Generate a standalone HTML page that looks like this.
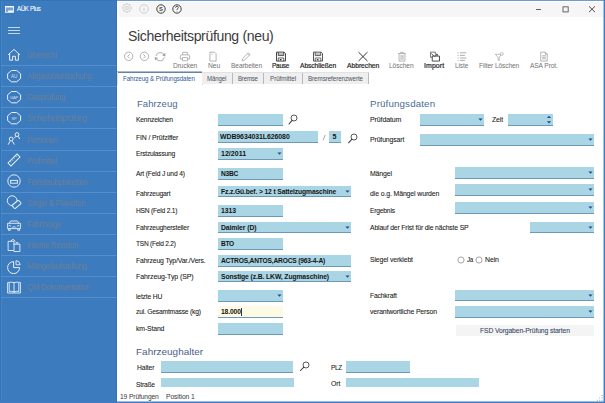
<!DOCTYPE html>
<html><head><meta charset="utf-8"><style>
html,body{margin:0;padding:0;width:605px;height:403px;overflow:hidden;background:#fff;font-family:"Liberation Sans", sans-serif;}
.t{position:absolute;white-space:pre;line-height:1;}
.s{-webkit-text-stroke:0.08px currentColor;}
.s2{-webkit-text-stroke:0.4px currentColor;}
.s3{-webkit-text-stroke:0.2px currentColor;}
.r{position:absolute;}
</style></head><body>
<div class="r" style="left:0px;top:0px;width:117px;height:403px;background:#3c7bbd;"></div>
<svg class="r" style="left:5px;top:5.6px" width="9" height="7" viewBox="0 0 9 7"><rect x="0.4" y="0.4" width="8.2" height="5.9" fill="rgba(255,255,255,0.3)" stroke="#fff" stroke-width="0.8"/><rect x="0.4" y="0.3" width="8.2" height="1.1" fill="#fff"/><rect x="3.1" y="4.5" width="4.8" height="1.5" fill="#fff"/></svg>
<div class="t s" style="left:17.00px;top:6px;font-size:6.6px;color:#ffffff;font-weight:normal;letter-spacing:0px;letter-spacing:-0.289px;transform:scaleX(0.911);transform-origin:0 0;">AÜK Plus</div>
<div class="r" style="left:8px;top:27px;width:11.6px;height:1px;background:#c3d6ec;"></div>
<div class="r" style="left:8px;top:30px;width:11.6px;height:1px;background:#c3d6ec;"></div>
<div class="r" style="left:8px;top:33px;width:11.6px;height:1px;background:#c3d6ec;"></div>
<div class="r" style="left:0px;top:65px;width:117px;height:1px;background:#5a93d2;opacity:0.8"></div>
<div class="t" style="left:27.20px;top:52px;font-size:8.2px;color:#6c7f98;font-weight:normal;letter-spacing:0px;letter-spacing:-0.266px;transform:scaleX(0.926);transform-origin:0 0;">Übersicht</div>
<svg class="r" style="left:5.9px;top:46.7px" width="16" height="16" viewBox="0 0 16 16"><path d="M2.1 7.9 L8 2.4 L13.9 7.9 M3.6 6.5 V13.2 H6.6 V9.3 H9.4 V13.2 H12.4 V6.5" fill="none" stroke="#e9f0f8" stroke-width="1"/></svg>
<div class="r" style="left:0px;top:86px;width:117px;height:1px;background:#5a93d2;opacity:0.8"></div>
<div class="t" style="left:27.20px;top:73px;font-size:8.2px;color:#6c7f98;font-weight:normal;letter-spacing:0px;letter-spacing:-0.251px;transform:scaleX(0.938);transform-origin:0 0;">Abgasuntersuchung</div>
<svg class="r" style="left:5.9px;top:67.8px" width="16" height="16" viewBox="0 0 16 16"><path d="M5.5 2.5 H10.7 L14.6 5.8 V10.5 L10.7 13.8 H5.5 L1.6 10.5 V5.8 Z" fill="none" stroke="#e9f0f8" stroke-width="1"/><text x="8.1" y="9.7" font-size="4.6" fill="#e9f0f8" text-anchor="middle" font-family="Liberation Sans" opacity="0.85">AU</text></svg>
<div class="r" style="left:0px;top:107px;width:117px;height:1px;background:#5a93d2;opacity:0.8"></div>
<div class="t" style="left:27.20px;top:94px;font-size:8.2px;color:#6c7f98;font-weight:normal;letter-spacing:0px;letter-spacing:-0.240px;transform:scaleX(0.941);transform-origin:0 0;">Gasprüfung</div>
<svg class="r" style="left:5.9px;top:88.9px" width="16" height="16" viewBox="0 0 16 16"><path d="M5.5 2.5 H10.7 L14.6 5.8 V10.5 L10.7 13.8 H5.5 L1.6 10.5 V5.8 Z" fill="none" stroke="#e9f0f8" stroke-width="1"/><text x="8.1" y="9.7" font-size="3.9" fill="#e9f0f8" text-anchor="middle" font-family="Liberation Sans" opacity="0.85">GAP</text></svg>
<div class="r" style="left:0px;top:128px;width:117px;height:1px;background:#5a93d2;opacity:0.8"></div>
<div class="t" style="left:27.20px;top:115px;font-size:8.2px;color:#6c7f98;font-weight:normal;letter-spacing:0px;letter-spacing:-0.238px;transform:scaleX(0.933);transform-origin:0 0;">Sicherheitsprüfung</div>
<svg class="r" style="left:5.9px;top:110.0px" width="16" height="16" viewBox="0 0 16 16"><path d="M5.5 2.5 H10.7 L14.6 5.8 V10.5 L10.7 13.8 H5.5 L1.6 10.5 V5.8 Z" fill="none" stroke="#e9f0f8" stroke-width="1"/><text x="8.1" y="9.7" font-size="4.0" fill="#e9f0f8" text-anchor="middle" font-family="Liberation Sans" opacity="0.85">SP</text></svg>
<div class="r" style="left:0px;top:150px;width:117px;height:1px;background:#5a93d2;opacity:0.8"></div>
<div class="t" style="left:27.20px;top:137px;font-size:8.2px;color:#6c7f98;font-weight:normal;letter-spacing:0px;letter-spacing:-0.285px;transform:scaleX(0.930);transform-origin:0 0;">Personen</div>
<svg class="r" style="left:5.9px;top:131.1px" width="16" height="16" viewBox="0 0 16 16"><circle cx="5.2" cy="8" r="1.9" fill="none" stroke="#e9f0f8" stroke-width="1"/><path d="M2.2 13.6 L4 10.2 M6.4 10.2 L8.4 13.6" fill="none" stroke="#e9f0f8" stroke-width="1"/><circle cx="11" cy="3.6" r="1.9" fill="none" stroke="#e9f0f8" stroke-width="1"/><path d="M9.6 5.4 L8.3 7.2 M12.4 5.4 L13.6 8" fill="none" stroke="#e9f0f8" stroke-width="1"/></svg>
<div class="r" style="left:0px;top:171px;width:117px;height:1px;background:#5a93d2;opacity:0.8"></div>
<div class="t" style="left:27.20px;top:158px;font-size:8.2px;color:#6c7f98;font-weight:normal;letter-spacing:0px;letter-spacing:-0.225px;transform:scaleX(0.930);transform-origin:0 0;">Prüfmittel</div>
<svg class="r" style="left:5.9px;top:152.2px" width="16" height="16" viewBox="0 0 16 16"><g transform="rotate(-45 8 8)"><rect x="1.6" y="5.9" width="12.8" height="4.2" fill="none" stroke="#e9f0f8" stroke-width="0.95"/><path d="M4.2 5.9 V7.4 M6.8 5.9 V7.8 M9.4 5.9 V7.4 M12 5.9 V7.8" stroke="#e9f0f8" stroke-width="0.75"/></g></svg>
<div class="r" style="left:0px;top:192px;width:117px;height:1px;background:#5a93d2;opacity:0.8"></div>
<div class="t" style="left:27.20px;top:179px;font-size:8.2px;color:#6c7f98;font-weight:normal;letter-spacing:0px;letter-spacing:-0.250px;transform:scaleX(0.930);transform-origin:0 0;">Feinstaubplaketten</div>
<svg class="r" style="left:5.9px;top:173.3px" width="16" height="16" viewBox="0 0 16 16"><circle cx="8" cy="8" r="6.2" fill="none" stroke="#e9f0f8" stroke-width="0.95"/><rect x="4.6" y="7.4" width="6.8" height="2.8" fill="none" stroke="#e9f0f8" stroke-width="0.95"/></svg>
<div class="r" style="left:0px;top:213px;width:117px;height:1px;background:#5a93d2;opacity:0.8"></div>
<div class="t" style="left:27.20px;top:200px;font-size:8.2px;color:#6c7f98;font-weight:normal;letter-spacing:0px;letter-spacing:-0.242px;transform:scaleX(0.930);transform-origin:0 0;">Siegel &amp; Plaketten</div>
<svg class="r" style="left:5.9px;top:194.4px" width="16" height="16" viewBox="0 0 16 16"><circle cx="6.2" cy="6.7" r="4.9" fill="none" stroke="#e9f0f8" stroke-width="1"/><g transform="rotate(-40 10.5 10.5)"><rect x="6.3" y="8.3" width="8.6" height="4.5" rx="1.2" fill="#3c7bbd" stroke="#e9f0f8" stroke-width="1"/></g></svg>
<div class="r" style="left:0px;top:234px;width:117px;height:1px;background:#5a93d2;opacity:0.8"></div>
<div class="t" style="left:27.20px;top:221px;font-size:8.2px;color:#6c7f98;font-weight:normal;letter-spacing:0px;letter-spacing:-0.283px;transform:scaleX(0.930);transform-origin:0 0;">Fahrzeuge</div>
<svg class="r" style="left:5.9px;top:215.5px" width="16" height="16" viewBox="0 0 16 16"><path d="M3.2 7.3 L4.6 5 H11.4 L12.8 7.3 M1.6 7.3 H14.4 V12.6 H1.6 Z M2.4 12.6 V14.3 H4.2 V12.6 M11.8 12.6 V14.3 H13.6 V12.6 M2.8 9.4 L5 10.2 M13.2 9.4 L11 10.2 M6.2 11.6 L6.8 10.9 H9.2 L9.8 11.6" fill="none" stroke="#e9f0f8" stroke-width="0.9"/></svg>
<div class="r" style="left:0px;top:255px;width:117px;height:1px;background:#5a93d2;opacity:0.8"></div>
<div class="t" style="left:27.20px;top:242px;font-size:8.2px;color:#6c7f98;font-weight:normal;letter-spacing:0px;letter-spacing:-0.255px;transform:scaleX(0.926);transform-origin:0 0;">Interne Revision</div>
<svg class="r" style="left:5.9px;top:236.6px" width="16" height="16" viewBox="0 0 16 16"><path d="M2.1 4.3 H8 V13.5 H2.1 Z M4.6 4.3 L7 2.3 L9.4 4.3 M7.6 7.2 H13.9 V14.5 H7.6" fill="none" stroke="#e9f0f8" stroke-width="0.9"/><path d="M10 7.2 V5.6 H12 V7.2" fill="none" stroke="#e9f0f8" stroke-width="0.8"/></svg>
<div class="r" style="left:0px;top:276px;width:117px;height:1px;background:#5a93d2;opacity:0.8"></div>
<div class="t" style="left:27.20px;top:263px;font-size:8.2px;color:#6c7f98;font-weight:normal;letter-spacing:0px;letter-spacing:-0.199px;transform:scaleX(0.946);transform-origin:0 0;">Mängelaufstellung</div>
<svg class="r" style="left:5.9px;top:257.7px" width="16" height="16" viewBox="0 0 16 16"><path d="M7.6 3.6 A6 6 0 1 0 13.6 9.6 H7.6 Z" fill="none" stroke="#e9f0f8" stroke-width="1"/><path d="M10 2.6 A4.6 4.6 0 0 1 14.2 6.8 H10 Z" fill="none" stroke="#e9f0f8" stroke-width="0.9"/></svg>
<div class="r" style="left:0px;top:297px;width:117px;height:1px;background:#5a93d2;opacity:0.8"></div>
<div class="t" style="left:27.20px;top:284px;font-size:8.2px;color:#6c7f98;font-weight:normal;letter-spacing:0px;letter-spacing:-0.233px;transform:scaleX(0.944);transform-origin:0 0;">QM Dokumentation</div>
<svg class="r" style="left:5.9px;top:278.8px" width="16" height="16" viewBox="0 0 16 16"><path d="M1.6 3.6 Q5 2.6 8 3.6 Q11 2.6 14.4 3.6 V14 H1.6 Z M8 3.6 V14 M3.2 4 V12.4 Q5.6 12 8 12.9 Q10.4 12 12.8 12.4 V4" fill="none" stroke="#e9f0f8" stroke-width="0.9"/></svg>
<div class="r" style="left:117px;top:0px;width:2px;height:403px;background:#ffffff;"></div>
<div class="r" style="left:119px;top:2px;width:484px;height:15px;background:#f6f6f6;"></div>
<svg class="r" style="left:121.3px;top:2.2px" width="12" height="12" viewBox="0 0 12 12"><path d="M10.48 5.56 L10.48 6.44 L9.16 6.96 L8.91 7.56 L9.48 8.85 L8.85 9.48 L7.56 8.91 L6.96 9.16 L6.44 10.48 L5.56 10.48 L5.04 9.16 L4.44 8.91 L3.15 9.48 L2.52 8.85 L3.09 7.56 L2.84 6.96 L1.52 6.44 L1.52 5.56 L2.84 5.04 L3.09 4.44 L2.52 3.15 L3.15 2.52 L4.44 3.09 L5.04 2.84 L5.56 1.52 L6.44 1.52 L6.96 2.84 L7.56 3.09 L8.85 2.52 L9.48 3.15 L8.91 4.44 L9.16 5.04 Z" fill="none" stroke="#c8c8c8" stroke-width="0.8" stroke-linejoin="round"/><circle cx="6" cy="6" r="1.5" fill="none" stroke="#c8c8c8" stroke-width="0.8"/></svg>
<svg class="r" style="left:138.4px;top:2.6px" width="12" height="12" viewBox="0 0 12 12"><circle cx="6" cy="6" r="4.3" fill="none" stroke="#c8c8c8" stroke-width="0.8"/><path d="M6 5 V8.6" stroke="#c8c8c8" stroke-width="0.8"/><circle cx="6" cy="3.8" r="0.45" fill="#c8c8c8"/></svg>
<svg class="r" style="left:154.6px;top:2.6px" width="12" height="12" viewBox="0 0 12 12"><circle cx="6" cy="6" r="4.2" fill="none" stroke="#404040" stroke-width="1"/><text x="6" y="8.1" font-size="5.8" font-weight="bold" fill="#404040" text-anchor="middle" font-family="Liberation Sans">S</text></svg>
<svg class="r" style="left:171.4px;top:2.6px" width="12" height="12" viewBox="0 0 12 12"><circle cx="6" cy="6" r="4.2" fill="none" stroke="#404040" stroke-width="1"/><path d="M4.6 4.8 Q4.6 3.3 6 3.3 Q7.4 3.3 7.4 4.6 Q7.4 5.5 6 6.1 V7" fill="none" stroke="#404040" stroke-width="0.8"/><circle cx="6" cy="8.3" r="0.45" fill="#404040"/></svg>
<div class="r" style="left:535.6px;top:9px;width:5.6px;height:1px;background:#606060;"></div>
<svg class="r" style="left:561px;top:5px" width="9" height="9"><rect x="2" y="1.8" width="5.2" height="5.1" fill="none" stroke="#606060" stroke-width="0.95"/></svg>
<svg class="r" style="left:588px;top:5px" width="9" height="9"><path d="M1 1.3 L7 7.1 M7 1.3 L1 7.1" stroke="#505050" stroke-width="1"/></svg>
<div class="t" style="left:127.60px;top:28px;font-size:15px;color:#3c3c3c;font-weight:normal;letter-spacing:0px;letter-spacing:-0.391px;transform:scaleX(0.939);transform-origin:0 0;">Sicherheitsprüfung (neu)</div>
<svg class="r" style="left:122px;top:50px" width="45" height="13" viewBox="0 0 45 13"><circle cx="6.7" cy="6.3" r="4.2" fill="none" stroke="#a2a2a2" stroke-width="0.85"/><path d="M7.6 4.3 L5.7 6.3 L7.6 8.3" fill="none" stroke="#a2a2a2" stroke-width="0.85"/><circle cx="22.4" cy="6.3" r="4.2" fill="none" stroke="#a2a2a2" stroke-width="0.85"/><path d="M21.5 4.3 L23.4 6.3 L21.5 8.3" fill="none" stroke="#a2a2a2" stroke-width="0.85"/><path d="M33.96 5.97 A4.2 4.2 0 0 1 42.16 5.61 M42.24 7.43 A4.2 4.2 0 0 1 34.04 7.79" fill="none" stroke="#a2a2a2" stroke-width="0.85"/><path d="M43.2 2.8 L43.4 6.4 L40.2 5.4 Z M33 10.6 L32.8 7.0 L36 8.0 Z" fill="#a2a2a2"/></svg>
<div class="t" style="left:172.60px;top:63px;font-size:6.8px;color:#727272;font-weight:normal;letter-spacing:0px;letter-spacing:-0.079px;transform:scaleX(0.978);transform-origin:0 0;">Drucken</div>
<svg class="r" style="left:178.2px;top:50px" width="14" height="13" viewBox="0 0 14 13"><g transform="translate(7 6.6) scale(0.86) translate(-7 -6.6)"><path d="M4.3 4.6 V1.6 H9.7 V4.6 M3 4.6 H11 Q12.4 4.6 12.4 6 V9.4 H10 M4 9.4 H1.6 V6 Q1.6 4.6 3 4.6 M4 7.8 H10 V11.4 H4 Z" fill="none" stroke="#a0a0a0" stroke-width="0.9"/></g></svg>
<div class="t" style="left:207.60px;top:63px;font-size:6.8px;color:#727272;font-weight:normal;letter-spacing:0px;letter-spacing:-0.045px;transform:scaleX(0.989);transform-origin:0 0;">Neu</div>
<svg class="r" style="left:206.4px;top:50px" width="14" height="13" viewBox="0 0 14 13"><g transform="translate(7 6.6) scale(0.86) translate(-7 -6.6)"><path d="M3.4 1.4 H8.8 L10.6 3.2 V11.8 H3.4 Z" fill="none" stroke="#a0a0a0" stroke-width="0.9"/><path d="M6 3 V4.6" stroke="#a0a0a0" stroke-width="0.7"/></g></svg>
<div class="t" style="left:230.80px;top:63px;font-size:6.8px;color:#727272;font-weight:normal;letter-spacing:0px;letter-spacing:-0.095px;transform:scaleX(0.970);transform-origin:0 0;">Bearbeiten</div>
<svg class="r" style="left:239.3px;top:50px" width="14" height="13" viewBox="0 0 14 13"><g transform="translate(7 6.6) scale(0.86) translate(-7 -6.6)"><path d="M2.6 11.4 L3.2 8.8 L9.8 2.2 L11.8 4.2 L5.2 10.8 Z M8.8 3.2 L10.8 5.2" fill="none" stroke="#a0a0a0" stroke-width="0.9"/></g></svg>
<div class="t s3" style="left:272.20px;top:63px;font-size:6.8px;color:#262626;font-weight:normal;letter-spacing:0px;letter-spacing:-0.218px;transform:scaleX(0.940);transform-origin:0 0;">Pause</div>
<svg class="r" style="left:274.3px;top:50px" width="14" height="13" viewBox="0 0 14 13"><g transform="translate(7 6.6) scale(0.86) translate(-7 -6.6)"><path d="M1.8 1.4 H10.6 L12.2 3 V11.8 H1.8 Z" fill="none" stroke="#3a3a3a" stroke-width="1.1"/><path d="M3.8 1.4 V5.4 H10.2 V1.4" fill="none" stroke="#3a3a3a" stroke-width="1"/><rect x="3.8" y="2.6" width="6.4" height="2.2" fill="#3a3a3a" opacity="0.35"/><path d="M3.8 11.8 V8.2 H10.2 V11.8" fill="none" stroke="#3a3a3a" stroke-width="0.9"/><rect x="5.6" y="9.4" width="2" height="1.6" fill="#3a3a3a"/></g></svg>
<div class="t s3" style="left:300.00px;top:63px;font-size:6.8px;color:#262626;font-weight:normal;letter-spacing:0px;letter-spacing:-0.059px;transform:scaleX(0.982);transform-origin:0 0;">Abschließen</div>
<svg class="r" style="left:311.2px;top:50px" width="14" height="13" viewBox="0 0 14 13"><g transform="translate(7 6.6) scale(0.86) translate(-7 -6.6)"><path d="M1.8 1.4 H10.6 L12.2 3 V11.8 H1.8 Z" fill="none" stroke="#4a4a4a" stroke-width="1.1"/><path d="M3.8 1.4 V5.4 H10.2 V1.4" fill="none" stroke="#4a4a4a" stroke-width="1"/><rect x="3.8" y="2.6" width="6.4" height="2.2" fill="#4a4a4a" opacity="0.35"/><path d="M3.8 11.8 V8.2 H10.2 V11.8" fill="none" stroke="#4a4a4a" stroke-width="0.9"/><rect x="5.6" y="9.4" width="2" height="1.6" fill="#4a4a4a"/></g></svg>
<div class="t s3" style="left:347.00px;top:63px;font-size:6.8px;color:#262626;font-weight:normal;letter-spacing:0px;letter-spacing:-0.033px;transform:scaleX(0.991);transform-origin:0 0;">Abbrechen</div>
<svg class="r" style="left:356px;top:50px" width="14" height="13" viewBox="0 0 14 13"><g transform="translate(7 6.6) scale(0.86) translate(-7 -6.6)"><path d="M1.8 1.4 L12.2 11.8 M12.2 1.4 L1.8 11.8" stroke="#2a2a2a" stroke-width="1.1"/></g></svg>
<div class="t" style="left:389.20px;top:63px;font-size:6.8px;color:#727272;font-weight:normal;letter-spacing:0px;letter-spacing:-0.086px;transform:scaleX(0.976);transform-origin:0 0;">Löschen</div>
<svg class="r" style="left:394.5px;top:50px" width="14" height="13" viewBox="0 0 14 13"><g transform="translate(7 6.6) scale(0.86) translate(-7 -6.6)"><path d="M2.6 3 H11.4 M5.5 3 V1.6 H8.5 V3 M3.6 3 V11.8 H10.4 V3" fill="none" stroke="#a0a0a0" stroke-width="0.9"/><rect x="5" y="4.6" width="4" height="5.8" fill="#a0a0a0" opacity="0.5"/></g></svg>
<div class="t s3" style="left:424.00px;top:63px;font-size:6.8px;color:#262626;font-weight:normal;letter-spacing:0px;letter-spacing:0.078px;transform:scaleX(1.024);transform-origin:0 0;">Import</div>
<svg class="r" style="left:427.6px;top:50px" width="14" height="13" viewBox="0 0 14 13"><g transform="translate(7 6.6) scale(0.86) translate(-7 -6.6)"><path d="M1.8 1.4 H7.4 V4.4 M1.8 1.4 V7.4 H3.8" fill="none" stroke="#555" stroke-width="0.9"/><path d="M3.8 6 H12.2 V11.8 H3.8 Z" fill="none" stroke="#333" stroke-width="1"/><path d="M2.6 3 L6.4 6.4 L9.6 4.2 M8 3.8 H9.8 V5.6" fill="none" stroke="#333" stroke-width="0.9"/></g></svg>
<div class="t" style="left:455.00px;top:63px;font-size:6.8px;color:#727272;font-weight:normal;letter-spacing:0px;letter-spacing:-0.116px;transform:scaleX(0.958);transform-origin:0 0;">Liste</div>
<svg class="r" style="left:454.6px;top:50px" width="14" height="13" viewBox="0 0 14 13"><g transform="translate(7 6.6) scale(0.86) translate(-7 -6.6)"><path d="M2.4 1.6 V2.8 M2.4 4.6 V5.8 M2.4 7.6 V8.8 M2.4 10.4 V11.6 M4.6 2.2 H12 M4.6 5.2 H10.4 M4.6 8.2 H12 M4.6 11 H10.4" fill="none" stroke="#a0a0a0" stroke-width="1"/></g></svg>
<div class="t" style="left:478.80px;top:63px;font-size:6.8px;color:#727272;font-weight:normal;letter-spacing:0px;letter-spacing:-0.089px;transform:scaleX(0.970);transform-origin:0 0;">Filter Löschen</div>
<svg class="r" style="left:492px;top:50px" width="14" height="13" viewBox="0 0 14 13"><g transform="translate(7 6.6) scale(0.78) translate(-7 -6.6)"><path d="M2.2 3.6 H10.4 L7.4 7.4 V11.8 L5.8 10.8 V7.4 Z" fill="none" stroke="#a0a0a0" stroke-width="0.9"/><circle cx="10.6" cy="3.2" r="1.8" fill="#fff" stroke="#a0a0a0" stroke-width="0.8"/></g></svg>
<div class="t" style="left:529.50px;top:63px;font-size:6.8px;color:#727272;font-weight:normal;letter-spacing:0px;letter-spacing:-0.093px;transform:scaleX(0.971);transform-origin:0 0;">ASA Prot.</div>
<svg class="r" style="left:536.8px;top:50px" width="14" height="13" viewBox="0 0 14 13"><g transform="translate(7 6.6) scale(0.86) translate(-7 -6.6)"><path d="M3.2 1.4 H8.6 L10.8 3.6 V11.8 H3.2 Z M8.4 1.4 V3.8 H10.8 M4.8 5.6 H9.2 M4.8 7.4 H9.2 M4.8 9.2 H9.2" fill="none" stroke="#a0a0a0" stroke-width="0.9"/></g></svg>
<div class="r" style="left:117px;top:71px;width:85px;height:1px;background:rgba(74,109,154,0.45);"></div>
<div class="r" style="left:117px;top:72px;width:85px;height:1px;background:rgba(74,109,154,0.85);"></div>
<div class="r" style="left:201.5px;top:72px;width:1px;height:12.5px;background:#d8d8d8;"></div>
<div class="r" style="left:117px;top:72px;width:1px;height:13px;background:#e0e0e0;"></div>
<div class="r" style="left:202px;top:72px;width:31px;height:12px;background:#efefef;"></div>
<div class="r" style="left:202px;top:72px;width:31px;height:1px;background:#e2e2e2;"></div>
<div class="r" style="left:232px;top:73px;width:1px;height:11px;background:#b9b9b9;"></div>
<div class="t" style="left:207.40px;top:76px;font-size:6.4px;color:#4a5263;font-weight:normal;letter-spacing:0px;letter-spacing:-0.156px;transform:scaleX(0.953);transform-origin:0 0;">Mängel</div>
<div class="r" style="left:233px;top:72px;width:31px;height:12px;background:#efefef;"></div>
<div class="r" style="left:233px;top:72px;width:31px;height:1px;background:#e2e2e2;"></div>
<div class="r" style="left:263px;top:73px;width:1px;height:11px;background:#b9b9b9;"></div>
<div class="t" style="left:238.00px;top:76px;font-size:6.4px;color:#4a5263;font-weight:normal;letter-spacing:0px;letter-spacing:-0.186px;transform:scaleX(0.947);transform-origin:0 0;">Bremse</div>
<div class="r" style="left:264px;top:72px;width:39px;height:12px;background:#efefef;"></div>
<div class="r" style="left:264px;top:72px;width:39px;height:1px;background:#e2e2e2;"></div>
<div class="r" style="left:302px;top:73px;width:1px;height:11px;background:#b9b9b9;"></div>
<div class="t" style="left:270.00px;top:76px;font-size:6.4px;color:#4a5263;font-weight:normal;letter-spacing:0px;letter-spacing:-0.050px;transform:scaleX(0.981);transform-origin:0 0;">Prüfmittel</div>
<div class="r" style="left:303px;top:72px;width:66px;height:12px;background:#efefef;"></div>
<div class="r" style="left:303px;top:72px;width:66px;height:1px;background:#e2e2e2;"></div>
<div class="r" style="left:368px;top:73px;width:1px;height:11px;background:#b9b9b9;"></div>
<div class="t" style="left:307.50px;top:76px;font-size:6.4px;color:#4a5263;font-weight:normal;letter-spacing:0px;letter-spacing:-0.071px;transform:scaleX(0.977);transform-origin:0 0;">Bremsreferenzwerte</div>
<div class="t" style="left:123.40px;top:76px;font-size:6.4px;color:#2f5d96;font-weight:normal;letter-spacing:0px;letter-spacing:-0.096px;transform:scaleX(0.969);transform-origin:0 0;">Fahrzeug &amp; Prüfungsdaten</div>
<div class="t" style="left:136.60px;top:99px;font-size:9.5px;color:#4c6b98;font-weight:normal;letter-spacing:0px;letter-spacing:0.029px;transform:scaleX(1.006);transform-origin:0 0;">Fahrzeug</div>
<div class="t" style="left:369.70px;top:99px;font-size:9.5px;color:#4c6b98;font-weight:normal;letter-spacing:0px;letter-spacing:0.131px;transform:scaleX(1.027);transform-origin:0 0;">Prüfungsdaten</div>
<div class="t" style="left:136.20px;top:347px;font-size:9.8px;color:#4a5e86;font-weight:normal;letter-spacing:0px;letter-spacing:0.046px;transform:scaleX(1.010);transform-origin:0 0;">Fahrzeughalter</div>
<div class="t s" style="left:136.20px;top:116px;font-size:7.2px;color:#1a1a1a;font-weight:normal;letter-spacing:0px;letter-spacing:-0.212px;transform:scaleX(0.941);transform-origin:0 0;">Kennzeichen</div>
<div class="t s" style="left:136.20px;top:134px;font-size:7.2px;color:#1a1a1a;font-weight:normal;letter-spacing:0px;letter-spacing:-0.125px;transform:scaleX(0.955);transform-origin:0 0;">FIN / Prüfziffer</div>
<div class="t s" style="left:136.20px;top:150px;font-size:7.2px;color:#1a1a1a;font-weight:normal;letter-spacing:0px;letter-spacing:-0.233px;transform:scaleX(0.928);transform-origin:0 0;">Erstzulassung</div>
<div class="t s" style="left:136.20px;top:170px;font-size:7.2px;color:#1a1a1a;font-weight:normal;letter-spacing:0px;letter-spacing:-0.187px;transform:scaleX(0.935);transform-origin:0 0;">Art (Feld J und 4)</div>
<div class="t s" style="left:136.20px;top:190px;font-size:7.2px;color:#1a1a1a;font-weight:normal;letter-spacing:0px;letter-spacing:-0.198px;transform:scaleX(0.940);transform-origin:0 0;">Fahrzeugart</div>
<div class="t s" style="left:136.20px;top:207px;font-size:7.2px;color:#1a1a1a;font-weight:normal;letter-spacing:0px;letter-spacing:-0.237px;transform:scaleX(0.926);transform-origin:0 0;">HSN (Feld 2.1)</div>
<div class="t s" style="left:136.20px;top:224px;font-size:7.2px;color:#1a1a1a;font-weight:normal;letter-spacing:0px;letter-spacing:-0.193px;transform:scaleX(0.939);transform-origin:0 0;">Fahrzeughersteller</div>
<div class="t s" style="left:136.20px;top:240px;font-size:7.2px;color:#1a1a1a;font-weight:normal;letter-spacing:0px;letter-spacing:-0.269px;transform:scaleX(0.913);transform-origin:0 0;">TSN (Feld 2.2)</div>
<div class="t s" style="left:136.20px;top:257px;font-size:7.2px;color:#1a1a1a;font-weight:normal;letter-spacing:0px;letter-spacing:-0.151px;transform:scaleX(0.952);transform-origin:0 0;">Fahrzeug Typ/Var./Vers.</div>
<div class="t s" style="left:136.20px;top:273px;font-size:7.2px;color:#1a1a1a;font-weight:normal;letter-spacing:0px;letter-spacing:-0.092px;transform:scaleX(0.974);transform-origin:0 0;">Fahrzeug-Typ (SP)</div>
<div class="t s" style="left:136.20px;top:293px;font-size:7.2px;color:#1a1a1a;font-weight:normal;letter-spacing:0px;letter-spacing:-0.187px;transform:scaleX(0.940);transform-origin:0 0;">letzte HU</div>
<div class="t s" style="left:136.20px;top:308px;font-size:7.2px;color:#1a1a1a;font-weight:normal;letter-spacing:0px;letter-spacing:-0.216px;transform:scaleX(0.934);transform-origin:0 0;">zul. Gesamtmasse (kg)</div>
<div class="t s" style="left:136.20px;top:325px;font-size:7.2px;color:#1a1a1a;font-weight:normal;letter-spacing:0px;letter-spacing:-0.154px;transform:scaleX(0.958);transform-origin:0 0;">km-Stand</div>
<div class="r" style="left:218.2px;top:114px;width:64.80000000000001px;height:11px;background:#a9d5e4;"></div>
<div class="r" style="left:218.2px;top:125px;width:64.80000000000001px;height:1px;background:#6e98b8;"></div>
<svg class="r" style="left:286.40px;top:114.20px" width="12" height="12" viewBox="0 0 12 12"><circle cx="8" cy="4" r="3" fill="none" stroke="#3a3a3a" stroke-width="0.85"/><path d="M6.08 6.30 L3.00 10.00" stroke="#3a3a3a" stroke-width="1.05" stroke-linecap="round"/></svg>
<div class="r" style="left:218.2px;top:131px;width:100.19999999999999px;height:11px;background:#a9d5e4;"></div>
<div class="r" style="left:218.2px;top:142px;width:100.19999999999999px;height:1px;background:#6e98b8;"></div>
<div class="t" style="left:220.40px;top:133px;font-size:7px;color:#141414;font-weight:bold;letter-spacing:0px;letter-spacing:-0.056px;transform:scaleX(0.986);transform-origin:0 0;">WDB9634031L626080</div>
<svg class="r" style="left:321px;top:134px" width="6" height="8"><path d="M2 6.4 L4.3 1.0" stroke="#9a8f88" stroke-width="0.8"/></svg>
<div class="r" style="left:329.1px;top:131px;width:11.5px;height:11px;background:#a9d5e4;"></div>
<div class="r" style="left:329.1px;top:142px;width:11.5px;height:1px;background:#6e98b8;"></div>
<div class="t" style="left:332.40px;top:133px;font-size:7px;color:#141414;font-weight:bold;letter-spacing:0px;">5</div>
<svg class="r" style="left:345.70px;top:132.70px" width="12" height="12" viewBox="0 0 12 12"><circle cx="8" cy="4" r="3" fill="none" stroke="#3a3a3a" stroke-width="0.85"/><path d="M5.96 6.20 L2.60 9.80" stroke="#3a3a3a" stroke-width="1.05" stroke-linecap="round"/></svg>
<div class="r" style="left:218.2px;top:148px;width:64.80000000000001px;height:11px;background:#a9d5e4;"></div>
<div class="r" style="left:218.2px;top:159px;width:64.80000000000001px;height:1px;background:#6e98b8;"></div>
<svg class="r" style="left:276.5px;top:152.0px" width="5" height="3"><path d="M0.4 0.4 L4.6 0.4 L2.5 2.8 Z" fill="#1f4b8a"/></svg>
<div class="t" style="left:220.70px;top:150px;font-size:7px;color:#141414;font-weight:bold;letter-spacing:0px;letter-spacing:0.020px;transform:scaleX(1.006);transform-origin:0 0;">12/2011</div>
<div class="r" style="left:218.2px;top:168px;width:64.80000000000001px;height:11px;background:#a9d5e4;"></div>
<div class="r" style="left:218.2px;top:179px;width:64.80000000000001px;height:1px;background:#6e98b8;"></div>
<div class="t" style="left:220.70px;top:170px;font-size:7px;color:#141414;font-weight:bold;letter-spacing:0px;letter-spacing:-0.245px;transform:scaleX(0.946);transform-origin:0 0;">N3BC</div>
<div class="r" style="left:218.2px;top:186px;width:132.8px;height:10px;background:#a9d5e4;"></div>
<div class="r" style="left:218.2px;top:196px;width:132.8px;height:1px;background:#6e98b8;"></div>
<svg class="r" style="left:344.5px;top:190.0px" width="5" height="3"><path d="M0.4 0.4 L4.6 0.4 L2.5 2.8 Z" fill="#1f4b8a"/></svg>
<div class="t" style="left:220.70px;top:188px;font-size:7px;color:#141414;font-weight:bold;letter-spacing:0px;letter-spacing:-0.131px;transform:scaleX(0.960);transform-origin:0 0;">Fz.z.Gü.bef. &gt; 12 t Sattelzugmaschine</div>
<div class="r" style="left:218.2px;top:205px;width:64.80000000000001px;height:11px;background:#a9d5e4;"></div>
<div class="r" style="left:218.2px;top:216px;width:64.80000000000001px;height:1px;background:#6e98b8;"></div>
<div class="t" style="left:220.70px;top:207px;font-size:7px;color:#141414;font-weight:bold;letter-spacing:0px;letter-spacing:-0.072px;transform:scaleX(0.981);transform-origin:0 0;">1313</div>
<div class="r" style="left:218.2px;top:222px;width:132.8px;height:10px;background:#a9d5e4;"></div>
<div class="r" style="left:218.2px;top:232px;width:132.8px;height:1px;background:#6e98b8;"></div>
<svg class="r" style="left:344.5px;top:226.0px" width="5" height="3"><path d="M0.4 0.4 L4.6 0.4 L2.5 2.8 Z" fill="#1f4b8a"/></svg>
<div class="t" style="left:220.70px;top:224px;font-size:7px;color:#141414;font-weight:bold;letter-spacing:0px;letter-spacing:-0.088px;transform:scaleX(0.973);transform-origin:0 0;">Daimler (D)</div>
<div class="r" style="left:218.2px;top:238px;width:65.30000000000001px;height:11px;background:#a9d5e4;"></div>
<div class="r" style="left:218.2px;top:249px;width:65.30000000000001px;height:1px;background:#6e98b8;"></div>
<div class="t" style="left:220.70px;top:240px;font-size:7px;color:#141414;font-weight:bold;letter-spacing:0px;letter-spacing:-0.293px;transform:scaleX(0.936);transform-origin:0 0;">BTO</div>
<div class="r" style="left:218.2px;top:255px;width:132.8px;height:11px;background:#a9d5e4;"></div>
<div class="r" style="left:218.2px;top:266px;width:132.8px;height:1px;background:#6e98b8;"></div>
<div class="t" style="left:220.70px;top:257px;font-size:7px;color:#141414;font-weight:bold;letter-spacing:0px;letter-spacing:-0.196px;transform:scaleX(0.950);transform-origin:0 0;">ACTROS,ANTOS,AROCS (963-4-A)</div>
<div class="r" style="left:218.2px;top:271px;width:132.8px;height:10px;background:#a9d5e4;"></div>
<div class="r" style="left:218.2px;top:281px;width:132.8px;height:1px;background:#6e98b8;"></div>
<svg class="r" style="left:344.5px;top:275.0px" width="5" height="3"><path d="M0.4 0.4 L4.6 0.4 L2.5 2.8 Z" fill="#1f4b8a"/></svg>
<div class="t" style="left:220.70px;top:273px;font-size:7px;color:#141414;font-weight:bold;letter-spacing:0px;letter-spacing:-0.111px;transform:scaleX(0.968);transform-origin:0 0;">Sonstige (z.B. LKW, Zugmaschine)</div>
<div class="r" style="left:218.2px;top:290px;width:64.80000000000001px;height:11px;background:#a9d5e4;"></div>
<div class="r" style="left:218.2px;top:301px;width:64.80000000000001px;height:1px;background:#6e98b8;"></div>
<svg class="r" style="left:276.5px;top:294.0px" width="5" height="3"><path d="M0.4 0.4 L4.6 0.4 L2.5 2.8 Z" fill="#1f4b8a"/></svg>
<div class="r" style="left:218.2px;top:306px;width:64.80000000000001px;height:11px;background:#fdfbe4;"></div>
<div class="r" style="left:218.2px;top:317px;width:64.80000000000001px;height:1px;background:#6e98b8;"></div>
<div class="t" style="left:220.70px;top:308px;font-size:7px;color:#141414;font-weight:bold;letter-spacing:0px;letter-spacing:-0.135px;transform:scaleX(0.961);transform-origin:0 0;">18.000</div>
<div class="r" style="left:241px;top:308px;width:1px;height:8px;background:#333;"></div>
<div class="r" style="left:218.2px;top:323px;width:64.80000000000001px;height:11px;background:#a9d5e4;"></div>
<div class="r" style="left:218.2px;top:334px;width:64.80000000000001px;height:1px;background:#6e98b8;"></div>
<div class="t s" style="left:370.00px;top:116px;font-size:7.2px;color:#1a1a1a;font-weight:normal;letter-spacing:0px;letter-spacing:-0.104px;transform:scaleX(0.971);transform-origin:0 0;">Prüfdatum</div>
<div class="t s" style="left:492.00px;top:116px;font-size:7.2px;color:#1a1a1a;font-weight:normal;letter-spacing:0px;letter-spacing:-0.111px;transform:scaleX(0.962);transform-origin:0 0;">Zeit</div>
<div class="t s" style="left:370.00px;top:136px;font-size:7.2px;color:#1a1a1a;font-weight:normal;letter-spacing:0px;letter-spacing:-0.130px;transform:scaleX(0.960);transform-origin:0 0;">Prüfungsart</div>
<div class="t s" style="left:370.00px;top:170px;font-size:7.2px;color:#1a1a1a;font-weight:normal;letter-spacing:0px;letter-spacing:-0.148px;transform:scaleX(0.961);transform-origin:0 0;">Mängel</div>
<div class="t s" style="left:370.00px;top:190px;font-size:7.2px;color:#1a1a1a;font-weight:normal;letter-spacing:0px;letter-spacing:-0.125px;transform:scaleX(0.962);transform-origin:0 0;">die o.g. Mängel wurden</div>
<div class="t s" style="left:370.00px;top:207px;font-size:7.2px;color:#1a1a1a;font-weight:normal;letter-spacing:0px;letter-spacing:-0.223px;transform:scaleX(0.933);transform-origin:0 0;">Ergebnis</div>
<div class="t s" style="left:370.00px;top:224px;font-size:7.2px;color:#1a1a1a;font-weight:normal;letter-spacing:0px;letter-spacing:-0.158px;transform:scaleX(0.947);transform-origin:0 0;">Ablauf der Frist für die nächste SP</div>
<div class="t s" style="left:370.00px;top:256px;font-size:7.2px;color:#1a1a1a;font-weight:normal;letter-spacing:0px;letter-spacing:-0.145px;transform:scaleX(0.952);transform-origin:0 0;">Siegel verklebt</div>
<div class="t s" style="left:370.00px;top:292px;font-size:7.2px;color:#1a1a1a;font-weight:normal;letter-spacing:0px;letter-spacing:-0.182px;transform:scaleX(0.942);transform-origin:0 0;">Fachkraft</div>
<div class="t s" style="left:370.00px;top:308px;font-size:7.2px;color:#1a1a1a;font-weight:normal;letter-spacing:0px;letter-spacing:-0.143px;transform:scaleX(0.955);transform-origin:0 0;">verantwortliche Person</div>
<div class="r" style="left:420px;top:114px;width:64px;height:11px;background:#a9d5e4;"></div>
<div class="r" style="left:420px;top:125px;width:64px;height:1px;background:#6e98b8;"></div>
<svg class="r" style="left:477.5px;top:118.0px" width="5" height="3"><path d="M0.4 0.4 L4.6 0.4 L2.5 2.8 Z" fill="#1f4b8a"/></svg>
<div class="r" style="left:507.5px;top:114px;width:45.5px;height:11px;background:#a9d5e4;"></div>
<div class="r" style="left:507.5px;top:125px;width:45.5px;height:1px;background:#6e98b8;"></div>
<svg class="r" style="left:546px;top:114px" width="6" height="11"><path d="M0.9 4 L3 1.8 L5.1 4 Z M0.9 7.3 L3 9.5 L5.1 7.3 Z" fill="#1f4b8a"/></svg>
<div class="r" style="left:420px;top:134px;width:174px;height:11px;background:#a9d5e4;"></div>
<div class="r" style="left:420px;top:145px;width:174px;height:1px;background:#6e98b8;"></div>
<svg class="r" style="left:587.5px;top:138.0px" width="5" height="3"><path d="M0.4 0.4 L4.6 0.4 L2.5 2.8 Z" fill="#1f4b8a"/></svg>
<div class="r" style="left:455px;top:167px;width:139px;height:11px;background:#a9d5e4;"></div>
<div class="r" style="left:455px;top:178px;width:139px;height:1px;background:#6e98b8;"></div>
<svg class="r" style="left:587.5px;top:171.0px" width="5" height="3"><path d="M0.4 0.4 L4.6 0.4 L2.5 2.8 Z" fill="#1f4b8a"/></svg>
<div class="r" style="left:455px;top:184px;width:139px;height:11px;background:#a9d5e4;"></div>
<div class="r" style="left:455px;top:195px;width:139px;height:1px;background:#6e98b8;"></div>
<svg class="r" style="left:587.5px;top:188.0px" width="5" height="3"><path d="M0.4 0.4 L4.6 0.4 L2.5 2.8 Z" fill="#1f4b8a"/></svg>
<div class="r" style="left:455px;top:202px;width:139px;height:11px;background:#a9d5e4;"></div>
<div class="r" style="left:455px;top:213px;width:139px;height:1px;background:#6e98b8;"></div>
<svg class="r" style="left:587.5px;top:206.0px" width="5" height="3"><path d="M0.4 0.4 L4.6 0.4 L2.5 2.8 Z" fill="#1f4b8a"/></svg>
<div class="r" style="left:529.5px;top:222px;width:64.5px;height:10px;background:#a9d5e4;"></div>
<div class="r" style="left:529.5px;top:232px;width:64.5px;height:1px;background:#6e98b8;"></div>
<svg class="r" style="left:587.5px;top:226.0px" width="5" height="3"><path d="M0.4 0.4 L4.6 0.4 L2.5 2.8 Z" fill="#1f4b8a"/></svg>
<svg class="r" style="left:456px;top:255px" width="30" height="10"><circle cx="5" cy="5" r="3.1" fill="#fff" stroke="#8f8f8f" stroke-width="0.8"/><circle cx="23" cy="5" r="3.1" fill="#fff" stroke="#8f8f8f" stroke-width="0.8"/></svg>
<div class="t s" style="left:466.80px;top:256px;font-size:7.2px;color:#1a1a1a;font-weight:normal;letter-spacing:0px;letter-spacing:-0.448px;transform:scaleX(0.866);transform-origin:0 0;">Ja</div>
<div class="t s" style="left:485.00px;top:256px;font-size:7.2px;color:#1a1a1a;font-weight:normal;letter-spacing:0px;letter-spacing:-0.125px;transform:scaleX(0.965);transform-origin:0 0;">Nein</div>
<div class="r" style="left:455px;top:290px;width:139px;height:10px;background:#a9d5e4;"></div>
<div class="r" style="left:455px;top:300px;width:139px;height:1px;background:#6e98b8;"></div>
<svg class="r" style="left:587.5px;top:294.0px" width="5" height="3"><path d="M0.4 0.4 L4.6 0.4 L2.5 2.8 Z" fill="#1f4b8a"/></svg>
<div class="r" style="left:455px;top:306px;width:139px;height:11px;background:#a9d5e4;"></div>
<div class="r" style="left:455px;top:317px;width:139px;height:1px;background:#6e98b8;"></div>
<svg class="r" style="left:587.5px;top:310.0px" width="5" height="3"><path d="M0.4 0.4 L4.6 0.4 L2.5 2.8 Z" fill="#1f4b8a"/></svg>
<div class="r" style="left:456px;top:325px;width:138px;height:11px;background:#f4f4f4;"></div>
<div class="t s" style="left:479.80px;top:327px;font-size:7px;color:#34465f;font-weight:normal;letter-spacing:0px;letter-spacing:-0.113px;transform:scaleX(0.966);transform-origin:0 0;">FSD Vorgaben-Prüfung starten</div>
<div class="t s" style="left:136.50px;top:364px;font-size:7px;color:#1a1a1a;font-weight:normal;letter-spacing:0px;letter-spacing:-0.116px;transform:scaleX(0.961);transform-origin:0 0;">Halter</div>
<div class="t s" style="left:136.20px;top:381px;font-size:7px;color:#1a1a1a;font-weight:normal;letter-spacing:0px;letter-spacing:-0.185px;transform:scaleX(0.944);transform-origin:0 0;">Straße</div>
<div class="r" style="left:160.7px;top:361px;width:132.8px;height:11px;background:#a9d5e4;"></div>
<div class="r" style="left:160.7px;top:372px;width:132.8px;height:1px;background:#6e98b8;"></div>
<svg class="r" style="left:297.90px;top:361.20px" width="12" height="12" viewBox="0 0 12 12"><circle cx="8" cy="4" r="3" fill="none" stroke="#3a3a3a" stroke-width="0.85"/><path d="M5.88 6.12 L2.50 9.50" stroke="#3a3a3a" stroke-width="1.05" stroke-linecap="round"/></svg>
<div class="t s" style="left:331.20px;top:364px;font-size:7px;color:#1a1a1a;font-weight:normal;letter-spacing:0px;letter-spacing:-0.357px;transform:scaleX(0.909);transform-origin:0 0;">PLZ</div>
<div class="t s" style="left:331.20px;top:380px;font-size:7px;color:#1a1a1a;font-weight:normal;letter-spacing:0px;letter-spacing:-0.072px;transform:scaleX(0.977);transform-origin:0 0;">Ort</div>
<div class="r" style="left:346.3px;top:361px;width:64.19999999999999px;height:11px;background:#a9d5e4;"></div>
<div class="r" style="left:346.3px;top:372px;width:64.19999999999999px;height:1px;background:#6e98b8;"></div>
<div class="r" style="left:161px;top:378px;width:132.5px;height:9px;background:#a9d5e4;"></div>
<div class="r" style="left:346.3px;top:378px;width:132.5px;height:9px;background:#a9d5e4;"></div>
<div class="r" style="left:119px;top:388px;width:484px;height:13px;background:#ffffff;"></div>
<div class="t" style="left:119.90px;top:393px;font-size:7px;color:#3a3a3a;font-weight:normal;letter-spacing:0px;letter-spacing:-0.139px;transform:scaleX(0.959);transform-origin:0 0;">19 Prüfungen</div>
<div class="t" style="left:165.60px;top:393px;font-size:7px;color:#3a3a3a;font-weight:normal;letter-spacing:0px;letter-spacing:-0.103px;transform:scaleX(0.966);transform-origin:0 0;">Position 1</div>
<svg class="r" style="left:595px;top:393px" width="8" height="8"><g fill="#a8a8a8"><rect x="6.6" y="2" width="1" height="1"/><rect x="4.2" y="4.4" width="1" height="1"/><rect x="6.6" y="4.4" width="1" height="1"/><rect x="1.8" y="6.8" width="1" height="1"/><rect x="4.2" y="6.8" width="1" height="1"/><rect x="6.6" y="6.8" width="1" height="1"/></g></svg>
<div class="r" style="left:117px;top:0px;width:488px;height:1px;background:#6f9bd0;"></div>
<div class="r" style="left:0px;top:0px;width:1px;height:403px;background:#2b77c0;"></div>
<div class="r" style="left:1px;top:0px;width:1px;height:403px;background:rgba(120,160,205,0.22);"></div>
<div class="r" style="left:116px;top:0px;width:1px;height:403px;background:rgba(40,100,170,0.35);"></div>
<div class="r" style="left:0px;top:0px;width:117px;height:1px;background:#3573bd;"></div>
<div class="r" style="left:603px;top:0px;width:1px;height:403px;background:rgba(63,124,194,0.45);"></div>
<div class="r" style="left:604px;top:0px;width:1px;height:403px;background:#3f7cc2;"></div>
<div class="r" style="left:0px;top:401px;width:605px;height:1px;background:rgba(63,124,194,0.5);"></div>
<div class="r" style="left:0px;top:402px;width:605px;height:1px;background:#3f7cc2;"></div>
</body></html>
